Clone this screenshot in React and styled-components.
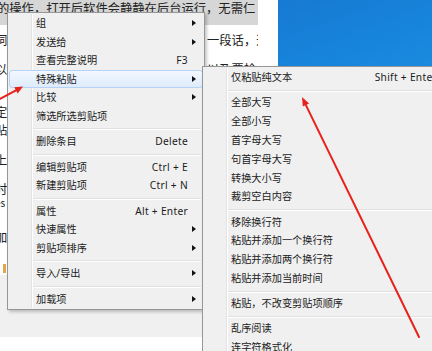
import React from 'react';
import styled, { createGlobalStyle, css } from 'styled-components';

const GlobalStyle = createGlobalStyle`
  html, body {
    margin: 0;
    padding: 0;
    background: #fff;
  }
  body {
    font-family: "Noto Sans", "Noto Sans CJK SC", sans-serif;
  }
`;

const Screen = styled.div`
  position: relative;
  width: 432px;
  height: 351px;
  overflow: hidden;
  display: flex;
  background: #fff;
`;

const Document = styled.div`
  width: 278px;
  flex-shrink: 0;
  display: flex;
  flex-direction: column;
  background: #fff;
`;

const Page = styled.div`
  width: 258px;
  height: 275px;
  overflow: hidden;
  font-family: "Noto Sans CJK SC", sans-serif;
  font-size: 12.3px;
  color: #222;
`;

const Band = styled.div`
  height: 25px;
  background: #d6d6d6;
  line-height: 16px;
  white-space: nowrap;
  text-indent: -3px;
`;

const Line = styled.div`
  display: flex;
  justify-content: space-between;
  height: ${p => p.$h || 16}px;
  line-height: ${p => p.$h || 16}px;
  margin-top: ${p => p.$mt}px;
  white-space: nowrap;
`;

const Edge = styled.span`
  margin-left: -5px;
  font-size: ${p => (p.$latin ? '10px' : 'inherit')};
`;

const Tail = styled.span`
  width: 51px;
  overflow: hidden;
`;

const Mark = styled.div`
  width: 3px;
  height: 9px;
  margin: ${p => p.$mt}px 0 0 3px;
  background: #e3a54a;
`;

const Footer = styled.div`
  height: 62px;
  background: #f0f0f0;
`;

const Desktop = styled.div`
  flex: 1;
  height: 66px;
  background: linear-gradient(160deg, #1779d2 0%, #1784db 60%, #1a8be0 100%);
`;

const Menu = styled.div`
  position: absolute;
  left: ${p => p.$x}px;
  top: ${p => p.$y}px;
  width: ${p => p.$w}px;
  box-sizing: border-box;
  padding: 1px;
  background: #f0f0f0;
  border: 1px solid #979797;
  box-shadow: 2px 2px 3px rgba(0, 0, 0, 0.22);
  font-size: 10.2px;
  color: #1b1b1b;
  z-index: ${p => p.$z};

  &::before {
    content: '';
    position: absolute;
    top: 1px;
    bottom: 1px;
    left: 23px;
    width: 1px;
    background: #e2e3e3;
    box-shadow: 1px 0 0 #fff;
  }
`;

const Row = styled.div`
  position: relative;
  display: grid;
  grid-template-columns: 1fr auto 14px;
  align-items: center;
  height: ${p => p.$h}px;
  box-sizing: border-box;
  padding-left: 26px;
  border: 1px solid transparent;
  border-radius: 3px;
  white-space: nowrap;

  ${p => p.$active && css`
    border-color: #b4d3f6;
    background: linear-gradient(#f3f8fe, #deebfb);
  `}
`;

const Label = styled.span`
  line-height: 1;
`;

const Shortcut = styled.span`
  letter-spacing: 0.3px;
  line-height: 1;
`;

const Arrow = styled.span`
  justify-self: start;
  margin-left: 4px;
  width: 0;
  height: 0;
  border-left: 4px solid #111;
  border-top: 3.5px solid transparent;
  border-bottom: 3.5px solid transparent;
`;

const Separator = styled.div`
  height: 1px;
  margin: 3px 2px ${p => p.$gap - 5}px 23px;
  background: #e0e0e0;
  border-bottom: 1px solid #fff;
`;

const Overlay = styled.svg`
  position: absolute;
  left: 0;
  top: 0;
  z-index: 10;
  pointer-events: none;
`;

const mainItems = [
  { t: '组', arrow: true },
  { t: '发送给', arrow: true },
  { t: '查看完整说明', key: 'F3' },
  { t: '特殊粘贴', arrow: true, active: true },
  { t: '比较', arrow: true },
  { t: '筛选所选剪贴项' },
  '-',
  { t: '删除条目', key: 'Delete' },
  '-',
  { t: '编辑剪贴项', key: 'Ctrl + E' },
  { t: '新建剪贴项', key: 'Ctrl + N' },
  '-',
  { t: '属性', key: 'Alt + Enter' },
  { t: '快速属性', arrow: true },
  { t: '剪贴项排序', arrow: true },
  '-',
  { t: '导入/导出', arrow: true },
  '-',
  { t: '加载项', arrow: true },
];

const pasteItems = [
  { t: '仅粘贴纯文本', key: 'Shift + Enter' },
  '-',
  { t: '全部大写' },
  { t: '全部小写' },
  { t: '首字母大写' },
  { t: '句首字母大写' },
  { t: '转换大小写' },
  { t: '裁剪空白内容' },
  '-',
  { t: '移除换行符' },
  { t: '粘贴并添加一个换行符' },
  { t: '粘贴并添加两个换行符' },
  { t: '粘贴并添加当前时间' },
  '-',
  { t: '粘贴，不改变剪贴项顺序' },
  '-',
  { t: '乱序阅读' },
  { t: '连字符格式化' },
];

function ContextMenu({ items, x, y, w, z, rowH, gap }) {
  return (
    <Menu $x={x} $y={y} $w={w} $z={z}>
      {items.map((it, i) =>
        it === '-' ? (
          <Separator key={i} $gap={gap} />
        ) : (
          <Row key={i} $h={rowH} $active={it.active}>
            <Label>{it.t}</Label>
            <Shortcut>{it.key}</Shortcut>
            {it.arrow ? <Arrow /> : <span />}
          </Row>
        )
      )}
    </Menu>
  );
}

export default function App() {
  return (
    <>
      <GlobalStyle />
      <Screen>
        <Document>
          <Page>
            <Band>的操作，打开后软件会静静在后台运行，无需仁</Band>
            <Line $mt={7}>
              <Edge>词</Edge>
              <Tail>一段话，这</Tail>
            </Line>
            <Line $mt={13}>
              <Edge>以</Edge>
              <Tail>以及要检</Tail>
            </Line>
            <Line $mt={27}><Edge>定</Edge></Line>
            <Line $mt={2}><Edge>贴</Edge></Line>
            <Line $mt={14}><Edge>上</Edge></Line>
            <Line $mt={14} $h={14}><Edge>时</Edge></Line>
            <Line $mt={0} $h={14}><Edge $latin>es</Edge></Line>
            <Line $mt={19}><Edge>加</Edge></Line>
            <Mark $mt={19} />
          </Page>
          <Footer />
        </Document>
        <Desktop />

        <ContextMenu items={mainItems} x={7} y={12} w={198} z={2} rowH={18.5} gap={7} />
        <ContextMenu items={pasteItems} x={202} y={66} w={252} z={3} rowH={18.8} gap={6.4} />

        <Overlay width="432" height="351" viewBox="0 0 432 351">
          <g stroke="#e8211b" strokeWidth="2" fill="#e8211b" strokeLinecap="round">
            <line x1="-2" y1="100" x2="16" y2="90.3" />
            <polygon points="23,86.5 17.7,93.4 14.3,87.2" stroke="none" />
            <line x1="419" y1="337" x2="305.9" y2="105.1" />
            <polygon points="302,97 309.1,103.6 302.8,106.6" stroke="none" />
          </g>
        </Overlay>
      </Screen>
    </>
  );
}
